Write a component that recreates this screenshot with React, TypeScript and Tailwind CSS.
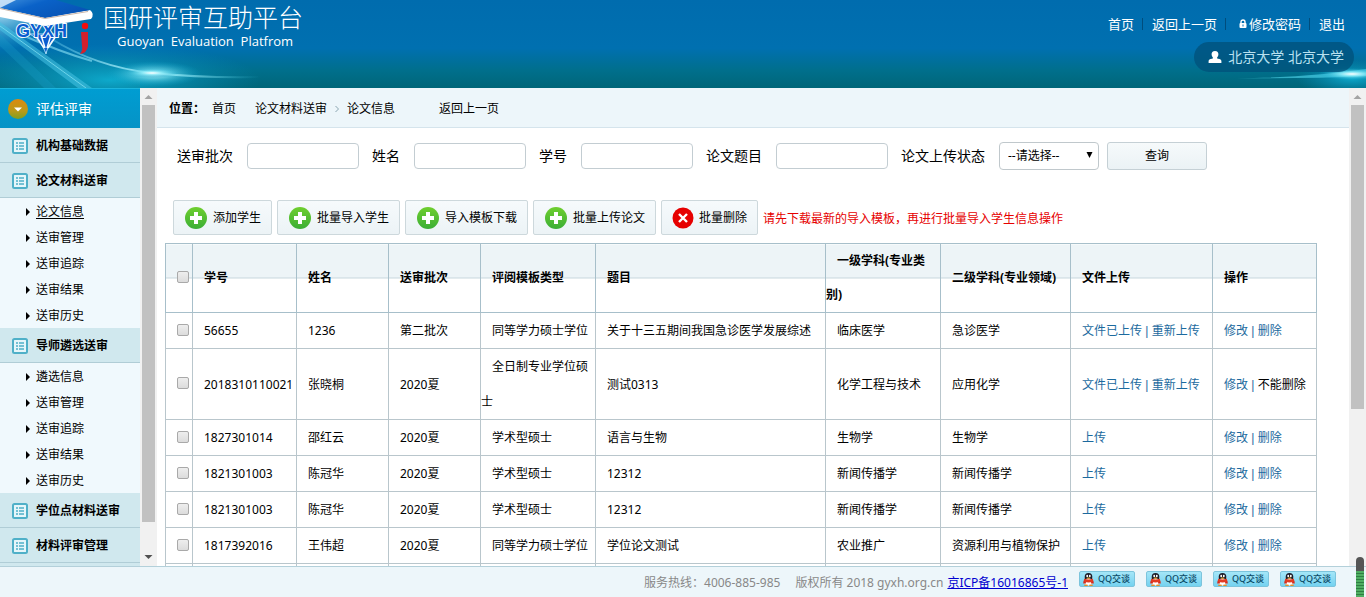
import { useState } from 'react';

interface MenuGroup {
  title: string;
  items: string[];
}

interface Paper {
  id: string;
  name: string;
  batch: string;
  template: string;
  title: string;
  first: string;
  second: string;
  uploaded: boolean;
  removable: boolean;
}

const menu: MenuGroup[] = [
  { title: '机构基础数据', items: [] },
  { title: '论文材料送审', items: ['论文信息', '送审管理', '送审追踪', '送审结果', '送审历史'] },
  { title: '导师遴选送审', items: ['遴选信息', '送审管理', '送审追踪', '送审结果', '送审历史'] },
  { title: '学位点材料送审', items: [] },
  { title: '材料评审管理', items: [] },
];

const papers: Paper[] = [
  { id: '56655', name: '1236', batch: '第二批次', template: '同等学力硕士学位', title: '关于十三五期间我国急诊医学发展综述', first: '临床医学', second: '急诊医学', uploaded: true, removable: true },
  { id: '2018310110021', name: '张晓桐', batch: '2020夏', template: '全日制专业学位硕士', title: '测试0313', first: '化学工程与技术', second: '应用化学', uploaded: true, removable: false },
  { id: '1827301014', name: '邵红云', batch: '2020夏', template: '学术型硕士', title: '语言与生物', first: '生物学', second: '生物学', uploaded: false, removable: true },
  { id: '1821301003', name: '陈冠华', batch: '2020夏', template: '学术型硕士', title: '12312', first: '新闻传播学', second: '新闻传播学', uploaded: false, removable: true },
  { id: '1821301003', name: '陈冠华', batch: '2020夏', template: '学术型硕士', title: '12312', first: '新闻传播学', second: '新闻传播学', uploaded: false, removable: true },
  { id: '1817392016', name: '王伟超', batch: '2020夏', template: '同等学力硕士学位', title: '学位论文测试', first: '农业推广', second: '资源利用与植物保护', uploaded: false, removable: true },
];

const headers = ['学号', '姓名', '送审批次', '评阅模板类型', '题目', '一级学科(专业类别)', '二级学科(专业领域)', '文件上传', '操作'];
const searchFields = ['送审批次', '姓名', '学号', '论文题目'];
const addButtons = ['添加学生', '批量导入学生', '导入模板下载', '批量上传论文'];

const checkboxClass =
  'mb-1 inline-block size-3 appearance-none rounded-[2px] border border-[#a9a9a9] bg-linear-to-b from-[#eeeeee] to-[#dcdcdc] align-middle checked:from-[#2a7ab8] checked:to-[#2a7ab8]';

function Logo() {
  return (
    <svg width="95" height="56" viewBox="0 0 95 56" aria-hidden="true">
      <defs>
        <linearGradient id="cap" x1="0" y1="0" x2="1" y2="0.6">
          <stop offset="0" stopColor="#3f8fdc" />
          <stop offset="0.4" stopColor="#0a62c8" />
          <stop offset="1" stopColor="#0752b4" />
        </linearGradient>
      </defs>
      <path d="M30 34 L60 34 C52 39 48 45 46 54 C43 45 38 39 30 34 Z" fill="#0a5cd0" stroke="#a8dcf5" strokeWidth="1" />
      <path d="M36 36 L44 48 M41 35 L45 48 M51 35 L47 48 M56 36 L48 48" stroke="#f2faff" strokeWidth="1.5" fill="none" />
      <text x="16" y="37" fontSize="18" fontWeight="700" fontFamily="Liberation Sans, sans-serif" fill="#0a5cd0" stroke="#f2faff" strokeWidth="2" paintOrder="stroke">
        GYXH
      </text>
      <path d="M0 8 L45 17 L90 10 Q95 14 91 19 L45 26 L0 17 Z" fill="#ffffff" />
      <path d="M0 0 H56 L90 10 L45 18 L0 8 Z" fill="url(#cap)" />
      <path d="M0 8.5 L45 18.5 L88 11.5" stroke="#c9b5a8" strokeWidth="1" fill="none" />
      <path d="M0 0 H16 L0 8 Z" fill="#e4f4ff" opacity="0.8" />
      <circle cx="85" cy="26" r="3.2" fill="#f20d0d" />
      <path d="M81 32 H88 V46 Q87 53 80 54 Q83 50 82 46 Z" fill="#d4202c" />
    </svg>
  );
}

function LeftGlow() {
  return (
    <svg className="absolute left-0 top-0" width="340" height="88" viewBox="0 0 340 88" aria-hidden="true">
      <defs>
        <radialGradient id="flare">
          <stop offset="0" stopColor="#ffffff" />
          <stop offset="0.35" stopColor="#8bebf8" stopOpacity="0.85" />
          <stop offset="1" stopColor="#0aa5cc" stopOpacity="0" />
        </radialGradient>
        <radialGradient id="haze">
          <stop offset="0" stopColor="#10b4d8" stopOpacity="0.85" />
          <stop offset="1" stopColor="#0a90c0" stopOpacity="0" />
        </radialGradient>
        <radialGradient id="corner">
          <stop offset="0" stopColor="#d8f5ff" stopOpacity="0.9" />
          <stop offset="1" stopColor="#35b5e4" stopOpacity="0" />
        </radialGradient>
        <linearGradient id="ray" x1="0" y1="0" x2="1" y2="0">
          <stop offset="0" stopColor="#6fd5f2" stopOpacity="0.3" />
          <stop offset="0.5" stopColor="#c8fbff" />
          <stop offset="1" stopColor="#3cc7de" stopOpacity="0" />
        </linearGradient>
      </defs>
      <ellipse cx="110" cy="80" rx="150" ry="36" fill="url(#haze)" />
      <ellipse cx="0" cy="10" rx="60" ry="40" fill="url(#corner)" />
      <path d="M0 22 L92 88 H78 L0 30 Z" fill="#47c3e3" opacity="0.55" />
      <path d="M0 26 L86 88" stroke="#7fdff2" strokeWidth="1" opacity="0.8" />
      <path d="M0 34 L56 88 H44 L0 46 Z" fill="#1a9ecb" opacity="0.3" />
      <path d="M20 34 Q60 52 92 61" stroke="#8fe6f6" strokeWidth="2" fill="none" opacity="0.6" />
      <path d="M50 38 Q96 67 152 73 Q200 78 260 77" stroke="url(#ray)" strokeWidth="2" fill="none" />
      <ellipse cx="154" cy="74" rx="48" ry="13" fill="url(#flare)" opacity="0.7" />
      <ellipse cx="152" cy="73" rx="28" ry="5" fill="url(#flare)" />
    </svg>
  );
}

function RightGlow() {
  return (
    <svg className="absolute right-0 top-0" width="160" height="88" viewBox="0 0 160 88" aria-hidden="true">
      <ellipse cx="146" cy="78" rx="56" ry="18" fill="url(#haze)" />
      <path d="M30 78 Q100 78 160 69 V76 Q100 79 30 78 Z" fill="#53d9ee" opacity="0.6" />
      <ellipse cx="146" cy="74" rx="34" ry="6" fill="url(#flare)" />
    </svg>
  );
}

function NavDivider() {
  return <span className="mr-[9px] ml-2 h-3 border-l border-[#004d7d]" />;
}

function Header() {
  return (
    <header className="relative flex h-[88px] shrink-0 justify-between bg-[linear-gradient(#006cae,#0070b0_55%,#006f8c_80%,#006678)] text-white">
      <LeftGlow />
      <RightGlow />
      <div className="relative flex gap-2">
        <Logo />
        <div className="pt-0.5">
          <h1 className="text-[25px] leading-[30px] font-light">国研评审互助平台</h1>
          <p className="pl-3.5 font-['Open_Sans','Noto_Sans',sans-serif] text-[13px] leading-[18px] whitespace-pre">Guoyan  Evaluation  Platfrom</p>
        </div>
      </div>
      <div className="relative flex flex-col items-end gap-2 pt-3.5 pr-3">
        <nav className="flex items-center pr-[9px] text-[13px] leading-5">
          <a href="#home">首页</a>
          <NavDivider />
          <a href="#back">返回上一页</a>
          <NavDivider />
          <a href="#password" className="flex items-center gap-0.5 pl-1">
            <svg width="8" height="10" viewBox="0 0 8 10" aria-hidden="true">
              <path d="M2 5 V3 a2 2 0 0 1 4 0 V5" stroke="#fff" strokeWidth="1.4" fill="none" />
              <rect x="0.5" y="4" width="7" height="5" rx="1" fill="#fff" />
              <rect x="3.5" y="5.5" width="1" height="2" fill="#0070b0" />
            </svg>
            修改密码
          </a>
          <NavDivider />
          <a href="#logout">退出</a>
        </nav>
        <div className="flex h-[30px] items-center gap-1.5 rounded-full bg-[#00507a]/75 pr-2.5 pl-3.5 text-sm text-[#b8e0f0]">
          <svg width="14" height="14" viewBox="0 0 14 14" aria-hidden="true">
            <path d="M7 1 C9.4 1 10.6 2.6 10.4 4.6 C10.2 6.4 9.4 7.2 9 7.8 Q9 8.6 10 8.8 Q13.4 9.4 13.4 11 V13 H0.6 V11 Q0.6 9.4 4 8.8 Q5 8.6 5 7.8 C4.6 7.2 3.8 6.4 3.6 4.6 C3.4 2.6 4.6 1 7 1 Z" fill="#fff" />
          </svg>
          北京大学 北京大学
        </div>
      </div>
    </header>
  );
}

function ListIcon() {
  return (
    <svg width="16" height="16" viewBox="0 0 16 16" aria-hidden="true">
      <rect x="1" y="1" width="14" height="14" rx="1.5" fill="#e6f6fa" stroke="#4fb0c8" strokeWidth="2" />
      <path d="M4 5 h2 M4 8 h2 M4 11 h2 M7 5 h5 M7 8 h5 M7 11 h5" stroke="#4fb0c8" strokeWidth="1.4" />
    </svg>
  );
}

function ScrollBar({ thumb, down }: { thumb: string; down: boolean }) {
  return (
    <div className="flex w-[17px] shrink-0 flex-col items-center bg-[#f1f1f1]" aria-hidden="true">
      <svg className="shrink-0" width="17" height="17" viewBox="0 0 17 17">
        <path d="M4.5 11 L8.5 7 L12.5 11 Z" fill="#a3a3a3" />
      </svg>
      <div className="min-h-0 w-full flex-1 px-0.5">
        <div className={`bg-[#c1c1c1] ${thumb}`} />
      </div>
      {down && (
        <svg className="shrink-0" width="17" height="17" viewBox="0 0 17 17">
          <path d="M4.5 6 L8.5 10 L12.5 6 Z" fill="#505050" />
        </svg>
      )}
    </div>
  );
}

function Sidebar() {
  return (
    <aside className="flex shrink-0">
      <div className="flex w-[140px] flex-col overflow-hidden bg-[#f0f9fd]">
        <div className="flex h-10 shrink-0 items-center gap-2 border-t border-[#1cb5dd] bg-linear-to-b from-[#009dd2] to-[#0593c6] pl-2 text-sm text-white">
          <svg width="20" height="20" viewBox="0 0 20 20" aria-hidden="true">
            <defs>
              <linearGradient id="orb" x1="0" y1="0" x2="0" y2="1">
                <stop offset="0" stopColor="#dc8a10" />
                <stop offset="0.6" stopColor="#b99a18" />
                <stop offset="1" stopColor="#7f9f20" />
              </linearGradient>
            </defs>
            <circle cx="10" cy="10" r="10" fill="url(#orb)" />
            <path d="M6 8.5 H14 L10 12.5 Z" fill="#fff" />
          </svg>
          评估评审
        </div>
        {menu.map(group => (
          <div key={group.title} className="shrink-0">
            <div className="flex h-[35px] items-center gap-2 border-b border-[#b0cdd6] bg-[#d0e8ee] pt-0.5 pl-3 text-xs font-bold">
              <ListIcon />
              {group.title}
            </div>
            {group.items.length > 0 && (
              <ul>
                {group.items.map(item => (
                  <li key={item} className="flex h-[26px] items-center gap-1.5 pt-0.5 pl-[26px] text-xs">
                    <svg width="4" height="8" viewBox="0 0 4 8" aria-hidden="true">
                      <path d="M0 0 L4 4 L0 8 Z" fill="#000" />
                    </svg>
                    <a href="#menu" className={item === '论文信息' ? 'underline underline-offset-2' : 'hover:underline'}>
                      {item}
                    </a>
                  </li>
                ))}
              </ul>
            )}
          </div>
        ))}
        <div className="flex-1 bg-[#d0e8ee]" />
      </div>
      <ScrollBar thumb="h-[94%]" down />
    </aside>
  );
}

function Breadcrumb() {
  return (
    <div className="flex h-10 shrink-0 items-center border-b border-[#d5e4ec] bg-[#edf6fa] pt-0.5 pl-3 text-xs">
      <span className="font-bold">位置：</span>
      <a href="#home" className="ml-[7px]">首页</a>
      <a href="#papers" className="ml-[19px]">论文材料送审</a>
      <svg className="mx-2" width="4" height="8" viewBox="0 0 4 8" aria-hidden="true">
        <path d="M0.5 1 L3.5 4 L0.5 7" stroke="#8aa5b0" fill="none" />
      </svg>
      <a href="#info">论文信息</a>
      <a href="#back" className="ml-11">返回上一页</a>
    </div>
  );
}

function SearchForm() {
  return (
    <form className="flex h-7 items-center gap-[13px] pl-3 text-sm whitespace-nowrap" onSubmit={e => e.preventDefault()}>
      {searchFields.map(field => (
        <label key={field} className="flex items-center gap-3.5">
          {field}
          <input type="text" className="h-[26px] w-28 rounded border border-[#c3cdd2] bg-white px-2 text-xs" />
        </label>
      ))}
      <label className="flex items-center gap-3.5">
        论文上传状态
        <span className="relative">
          <select className="block h-7 w-[100px] appearance-none rounded border border-[#c0c8cc] bg-white pl-2 text-xs">
            <option>--请选择--</option>
            <option>已上传</option>
            <option>未上传</option>
          </select>
          <svg className="pointer-events-none absolute top-2.5 right-1.5" width="7" height="6" viewBox="0 0 7 6" aria-hidden="true">
            <path d="M0.5 0 H6.5 L3.5 6 Z" fill="#000" />
          </svg>
        </span>
      </label>
      <button type="submit" className="-ml-[5px] h-7 w-[100px] rounded-[3px] border border-[#c5d0d5] bg-linear-to-b from-[#f6fafb] to-[#ebf2f5] text-xs">
        查询
      </button>
    </form>
  );
}

function AddIcon() {
  return (
    <svg width="24" height="24" viewBox="0 0 24 24" aria-hidden="true">
      <defs>
        <linearGradient id="green" x1="0" y1="0" x2="0" y2="1">
          <stop offset="0" stopColor="#6fcf2f" />
          <stop offset="1" stopColor="#3bae35" />
        </linearGradient>
      </defs>
      <circle cx="12" cy="12" r="11" fill="url(#green)" />
      <path d="M12 6 V18 M6 12 H18" stroke="#fff" strokeWidth="4" />
    </svg>
  );
}

function Toolbar() {
  const buttonClass =
    'flex h-[35px] items-center gap-[5px] rounded-[2px] border border-[#cdd8dc] bg-linear-to-b from-[#f6fafc] to-[#ecf3f6] px-2.5';
  return (
    <div className="flex items-center gap-[5px] pl-2 text-xs whitespace-nowrap">
      {addButtons.map(text => (
        <button key={text} type="button" className={buttonClass}>
          <AddIcon />
          {text}
        </button>
      ))}
      <button type="button" className={buttonClass}>
        <svg width="22" height="22" viewBox="0 0 22 22" aria-hidden="true">
          <circle cx="11" cy="11" r="10.5" fill="#e60000" />
          <path d="M7 7 L15 15 M15 7 L7 15" stroke="#fff" strokeWidth="2.4" />
        </svg>
        批量删除
      </button>
      <p className="pt-0.5 text-[#e60000]">请先下载最新的导入模板，再进行批量导入学生信息操作</p>
    </div>
  );
}

function Divider() {
  return <span className="font-['Liberation_Sans',sans-serif] leading-none"> | </span>;
}

function PaperTable() {
  const [selected, setSelected] = useState<number[]>([]);

  const toggle = (index: number) => {
    setSelected(prev => (prev.includes(index) ? prev.filter(i => i !== index) : [...prev, index]));
  };

  const toggleAll = () => {
    setSelected(prev => (prev.length === papers.length ? [] : papers.map((_, i) => i)));
  };

  const cell = 'border border-[#b9c6cc] p-0 indent-[11px]';
  const headCell =
    'border border-[#a7bfca] p-0 text-left indent-[11px] leading-[34px] bg-[linear-gradient(#edf4f7_33px,#c6d6dd_33px,#c6d6dd_34px,transparent_34px)]';

  return (
    <table className="w-full table-fixed border-collapse text-xs leading-[35px]">
      <colgroup>
        <col className="w-[27px]" />
        <col className="w-[104px]" />
        <col className="w-[92px]" />
        <col className="w-[92px]" />
        <col className="w-[115px]" />
        <col />
        <col className="w-[115px]" />
        <col className="w-[130px]" />
        <col className="w-[142px]" />
        <col className="w-[104px]" />
      </colgroup>
      <thead>
        <tr>
          <th className={headCell}>
            <input type="checkbox" aria-label="全选" className={checkboxClass} checked={selected.length === papers.length} onChange={toggleAll} />
          </th>
          {headers.map(h => (
            <th key={h} className={headCell}>{h}</th>
          ))}
        </tr>
      </thead>
      <tbody>
        {papers.map((p, i) => (
          <tr key={i}>
            <td className={cell}>
              <input type="checkbox" aria-label={p.name} className={checkboxClass} checked={selected.includes(i)} onChange={() => toggle(i)} />
            </td>
            <td className={cell}>{p.id}</td>
            <td className={cell}>{p.name}</td>
            <td className={cell}>{p.batch}</td>
            <td className={cell}>{p.template}</td>
            <td className={cell}>{p.title}</td>
            <td className={cell}>{p.first}</td>
            <td className={cell}>{p.second}</td>
            <td className={`${cell} text-[#1c6a9e]`}>
              {p.uploaded ? (
                <>
                  <a href="#file">文件已上传</a>
                  <Divider />
                  <a href="#reupload">重新上传</a>
                </>
              ) : (
                <a href="#upload">上传</a>
              )}
            </td>
            <td className={`${cell} text-[#1c6a9e]`}>
              <a href="#edit">修改</a>
              <Divider />
              {p.removable ? <a href="#delete">删除</a> : <span className="text-black">不能删除</span>}
            </td>
          </tr>
        ))}
        {/* 末尾空行 */}
        <tr>
          <td className={cell} />
          {headers.map(h => (
            <td key={h} className={cell}>&nbsp;</td>
          ))}
        </tr>
      </tbody>
    </table>
  );
}

function QQBadge() {
  return (
    <a href="#qq" className="flex h-4 w-14 items-center gap-1 rounded-[2px] border border-[#7cc4dc] bg-linear-to-b from-[#a4e6f8] to-[#74d2f0] pl-[3px] text-[9px] leading-3 font-medium whitespace-nowrap text-[#0a4a66]">
      <svg className="shrink-0" width="11" height="13" viewBox="0 0 11 13" aria-hidden="true">
        <ellipse cx="5.5" cy="4" rx="3.8" ry="4" fill="#1c1c28" />
        <ellipse cx="5.5" cy="9" rx="4.2" ry="3.4" fill="#fff" />
        <path d="M1.6 6 Q0 8 0.2 10.5 L3 10.5 L2.8 8.4 Z M9.4 6 Q11 8 10.8 10.5 L8 10.5 L8.2 8.4 Z" fill="#d42a1c" />
        <path d="M1.2 5.4 Q5.5 7.6 9.8 5.4 L10 8.4 Q5.5 10.6 1 8.4 Z" fill="#e23b22" />
        <ellipse cx="4.2" cy="3" rx="0.9" ry="1.2" fill="#fff" />
        <ellipse cx="6.8" cy="3" rx="0.9" ry="1.2" fill="#fff" />
        <ellipse cx="5.5" cy="5.1" rx="2" ry="0.7" fill="#f5a81c" />
        <ellipse cx="3" cy="12.2" rx="2.2" ry="0.8" fill="#ee8a1c" />
        <ellipse cx="8" cy="12.2" rx="2.2" ry="0.8" fill="#ee8a1c" />
      </svg>
      QQ交谈
    </a>
  );
}

function Footer() {
  return (
    <footer className="relative flex h-[31px] shrink-0 justify-end gap-[11px] border-t border-[#b3d0da] bg-[#edf6fa] pr-[30px] text-xs leading-[31px] text-[#888888]">
      <div className="flex gap-[15px]">
        <span>服务热线：4006-885-985</span>
        <span>版权所有 2018 gyxh.org.cn</span>
        <a href="#icp" className="-ml-[11px] text-[#0000d0] underline">京ICP备16016865号-1</a>
      </div>
      <div className="flex gap-[11px] pt-1">
        <QQBadge />
        <QQBadge />
        <QQBadge />
        <QQBadge />
      </div>
      <div className="absolute right-0.5 bottom-0 h-10 w-2 rounded-t-full border-t-[14px] border-[#555555] bg-[repeating-linear-gradient(#4fae62_0_2px,#2f7f43_2px_3px)]" />
    </footer>
  );
}

export default function App() {
  return (
    <div className="flex h-screen flex-col overflow-hidden bg-white font-['Noto_Sans','Noto_Sans_CJK_SC',sans-serif] text-black">
      <Header />
      <div className="flex min-h-0 flex-1">
        <Sidebar />
        <main className="flex min-w-0 flex-1 flex-col overflow-hidden">
          <Breadcrumb />
          <div className="pt-3.5 pr-8 pl-2">
            <SearchForm />
            <div className="pt-[30px] pb-2">
              <Toolbar />
            </div>
            <PaperTable />
          </div>
        </main>
        <ScrollBar thumb="h-[66%]" down={false} />
      </div>
      <Footer />
    </div>
  );
}
